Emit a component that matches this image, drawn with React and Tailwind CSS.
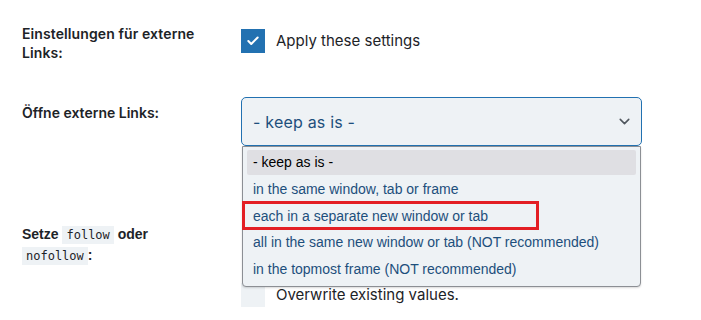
import { ChevronDown, Check } from "lucide-react";

const options = [
    "- keep as is -",
    "in the same window, tab or frame",
    "each in a separate new window or tab",
    "all in the same new window or tab (NOT recommended)",
    "in the topmost frame (NOT recommended)",
];

export default function App() {
    return (
        <div className="w-[701px] h-[320px] bg-white overflow-hidden relative font-['Inter',sans-serif] text-[#1d2327]">
            {/* row 1 */}
            <div className="flex pl-[22px] pt-[24px]">
                <div className="w-[219px] text-[14px] leading-[19px] font-semibold tracking-[0.1px]">
                    Einstellungen für externe<br />Links:
                </div>
                <label className="flex items-center gap-[11px] mt-[5px] h-[24px]">
                    <span className="w-[24px] h-[24px] bg-[#2271b1] flex items-center justify-center">
                        <Check size={14} strokeWidth={3.5} className="text-white" />
                    </span>
                    <span className="text-[15px] text-[#1d2327]">Apply these settings</span>
                </label>
            </div>

            {/* row 2 */}
            <div className="relative z-10 flex pl-[22px] mt-[35px]">
                <div className="w-[219px] pt-[6px] text-[14px] leading-[20px] font-semibold">
                    Öffne externe Links:
                </div>
                <div className="relative">
                    <div className="w-[401px] h-[49px] border border-[#2271b1] rounded-[5px] bg-[#eef2f5] flex items-center justify-between pl-[11px] pr-[8px]">
                        <span className="text-[16px] text-[#1d4f7c] tracking-[0.2px]">- keep as is -</span>
                        <ChevronDown size={17} strokeWidth={2.2} className="text-[#50575e]" />
                    </div>

                    {/* open dropdown list */}
                    <div className="absolute left-[1px] top-[49px] w-[399px] bg-[#eef2f5] border border-[#8c8f94] rounded-b-[4px] shadow-[0_1px_2px_rgba(0,0,0,0.15)] pt-[3px] pb-[3px] px-[4px] font-['Liberation_Sans',Arial,sans-serif] text-[14px]">
                        {options.map((o, i) => (
                            <div
                                key={o}
                                className={
                                    i === 0
                                        ? "h-[25px] flex items-center px-[6px] bg-[#dfdfe3] rounded-[2px] text-black mb-[1.5px]"
                                        : "h-[26.5px] flex items-center px-[6px] text-[#1d4f7c]"
                                }
                            >
                                {o}
                            </div>
                        ))}
                        <div className="absolute left-[-1px] top-[54px] w-[297px] h-[29px] border-[3px] border-[#e31e24]"></div>
                    </div>
                </div>
            </div>

            {/* row 3 */}
            <div className="flex pl-[22px] mt-[78px]">
                <div className="w-[219px] text-[14px] leading-[20px] font-bold font-['Liberation_Sans',sans-serif] text-[#1d2327]">
                    Setze{" "}
                    <code className="bg-[#eef2f5] px-[4px] py-[2px] font-['DejaVu_Sans_Mono',monospace] text-[12px] font-normal">follow</code>{" "}
                    oder<br />
                    <code className="bg-[#eef2f5] px-[4px] py-[2px] font-['DejaVu_Sans_Mono',monospace] text-[12px] font-normal">nofollow</code>:
                </div>
                <div className="w-[401px] h-[49px]"></div>
            </div>

            <div className="flex pl-[241px] mt-[10px]">
                <label className="flex items-center gap-[11px]">
                    <span className="w-[24px] h-[24px] bg-[#eef2f5]"></span>
                    <span className="text-[15px] text-[#1d2327]">Overwrite existing values.</span>
                </label>
            </div>
        </div>
    );
}
